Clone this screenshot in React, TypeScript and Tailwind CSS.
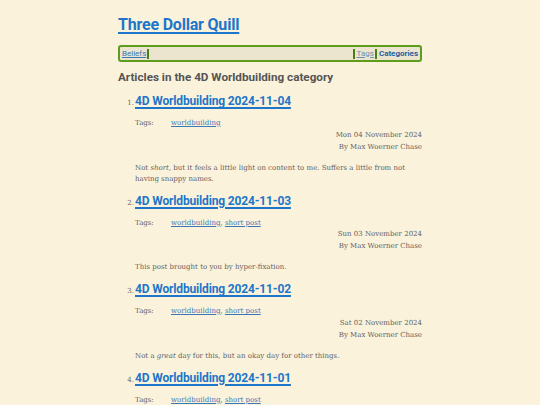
import React from "react"

const posts = [
  {
    n: 1,
    title: "4D Worldbuilding 2024-11-04",
    tags: ["worldbuilding"],
    date: "Mon 04 November 2024",
    body: (
      <>
        Not <em>short</em>, but it feels a little light on content to me. Suffers a little from not having snappy names.
      </>
    ),
  },
  {
    n: 2,
    title: "4D Worldbuilding 2024-11-03",
    tags: ["worldbuilding", "short post"],
    date: "Sun 03 November 2024",
    body: <>This post brought to you by hyper-fixation.</>,
  },
  {
    n: 3,
    title: "4D Worldbuilding 2024-11-02",
    tags: ["worldbuilding", "short post"],
    date: "Sat 02 November 2024",
    body: (
      <>
        Not a <em>great</em> day for this, but an okay day for other things.
      </>
    ),
  },
  {
    n: 4,
    title: "4D Worldbuilding 2024-11-01",
    tags: ["worldbuilding", "short post"],
    date: "Fri 01 November 2024",
    body: <>Another day.</>,
  },
]

const sans = { fontFamily: 'Roboto, "Open Sans", sans-serif' }
const serif = { fontFamily: '"DejaVu Serif", "Liberation Serif", serif' }

export default function App() {
  return (
    <div className="h-[405px] overflow-hidden bg-[#fbf2dc]">
      <div className="w-[304px] mx-auto pt-[14px]">
        {/* Site title */}
        <a
          href="/"
          className="block text-[16px] leading-[22px] font-bold tracking-[-0.2px] text-[#1d76c9] underline decoration-[1.5px] underline-offset-2"
          style={sans}
        >
          Three Dollar Quill
        </a>

        {/* Nav */}
        <nav
          className="mt-[9px] h-[17px] flex items-center border-2 border-[#5e9c1c] rounded-[3px] bg-[#ebe4cf] px-[2px] text-[8px] leading-none"
          style={sans}
        >
          <a href="/" className="text-[#3a78b8] underline">Beliefs</a>
          <span className="ml-[1px] w-[2px] h-[10px] bg-[#4a7f12]" />
          <span className="flex-1" />
          <span className="w-[2px] h-[10px] bg-[#4a7f12]" />
          <a href="/" className="ml-[2px] text-[#6c93b8] underline">Tags</a>
          <span className="ml-[1px] w-[2px] h-[10px] bg-[#4a7f12]" />
          <a href="/" className="ml-[2px] font-bold text-[#1f5fa0]">Categories</a>
        </nav>

        {/* Heading */}
        <h2 className="mt-[7px] text-[11.7px] leading-[16px] font-bold text-[#555]" style={sans}>
          Articles in the 4D Worldbuilding category
        </h2>

        <ol className="mt-[7px]">
          {posts.map((p) => (
            <li key={p.n} className="mb-[7px]">
              <div className="flex items-baseline">
                <span className="w-[17px] text-right pr-[1px] text-[7px] text-[#666]" style={serif}>
                  {p.n}.
                </span>
                <a
                  href="/"
                  className="text-[12px] leading-[18px] font-bold tracking-[-0.15px] text-[#1d76c9] underline decoration-[1.5px] underline-offset-2"
                  style={sans}
                >
                  {p.title}
                </a>
              </div>
              <div className="pl-[17px] text-[7px] text-[#5f5f5f]" style={serif}>
                <div className="mt-[8px] flex">
                  <span className="w-[36px]">Tags:</span>
                  <span>
                    {p.tags.map((t, i) => (
                      <React.Fragment key={t}>
                        {i > 0 && ", "}
                        <a href="/" className="text-[#3a78b8] underline">{t}</a>
                      </React.Fragment>
                    ))}
                  </span>
                </div>
                <div className="text-right leading-[12px]">
                  <div>{p.date}</div>
                  <div>By Max Woerner Chase</div>
                </div>
                <p className="mt-[10px] leading-[11px]">{p.body}</p>
              </div>
            </li>
          ))}
        </ol>
      </div>
    </div>
  )
}
